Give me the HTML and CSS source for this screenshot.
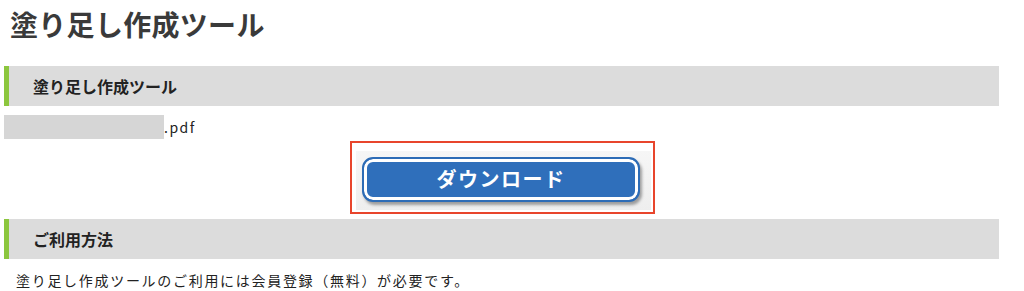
FILE: index.html
```html
<!DOCTYPE html>
<html lang="ja">
<head>
<meta charset="utf-8">
<title>塗り足し作成ツール</title>
<link rel="stylesheet" href="styles.css">
</head>
<body>
<main class="page">
  <h1 class="page-title">塗り足し作成ツール</h1>
  <section class="block">
    <h2 class="block-head">塗り足し作成ツール</h2>
    <div class="file-row"><span class="file-mask"></span><span class="file-ext">.pdf</span></div>
    <div class="download">
      <div class="download-frame">
        <div class="download-img">
          <a class="download-btn" href="#">ダウンロード</a>
        </div>
      </div>
    </div>
  </section>
  <section class="block">
    <h2 class="block-head">ご利用方法</h2>
    <p class="note">塗り足し作成ツールのご利用には会員登録（無料）が必要です。</p>
  </section>
</main>
</body>
</html>
```

FILE: styles.css
```css
html, body {
  margin: 0;
  padding: 0;
  background: #fff;
}
body {
  font-family: "Noto Sans CJK JP", "Noto Sans", sans-serif;
  color: #222;
}
.page {
  width: 995px;
  margin-left: 4px;
}
.page-title {
  margin: 0 0 18px 6px;
  height: 48px;
  line-height: 48px;
  font-size: 28px;
  font-weight: 700;
  letter-spacing: 0.3px;
  color: #3a3a3a;
}
.block-head {
  margin: 0;
  height: 40px;
  line-height: 40px;
  background: #dcdcdc;
  border-left: 5px solid #8cc63e;
  padding-left: 24px;
  font-size: 16px;
  font-weight: 700;
  color: #222;
}
.file-row {
  margin-top: 9px;
  height: 24px;
  line-height: 24px;
  display: flex;
}
.file-mask {
  width: 160px;
  height: 24px;
  background: #d6d6d6;
}
.file-ext {
  font-size: 14px;
  letter-spacing: 1.5px;
  color: #222;
}
.download {
  margin-top: 2px;
  margin-bottom: 5px;
  display: flex;
  justify-content: center;
}
.download-frame {
  margin-left: 2px;
  width: 305px;
  height: 73px;
  border: 2px solid #e8452c;
  padding: 8px 0 2px 4px;
  box-sizing: border-box;
  display: flex;
}
.download-img {
  width: 295px;
  height: 59px;
  background: linear-gradient(#f6f6f6, #eeeeee);
  padding: 6px 0 0 6px;
  box-sizing: border-box;
}
.download-btn {
  display: block;
  width: 278px;
  height: 45px;
  box-sizing: border-box;
  border: 2px solid #2d6cb6;
  border-radius: 11px;
  background: #2f6fbb;
  box-shadow: inset 0 0 0 3px #fff, 2px 3px 3px rgba(0, 0, 0, 0.35);
  color: #fff;
  text-decoration: none;
  text-align: center;
  font-size: 20px;
  font-weight: 700;
  letter-spacing: 1.5px;
  line-height: 40px;
}
.note {
  margin: 10px 0 0 12px;
  line-height: 22px;
  font-size: 14px;
  letter-spacing: 1.7px;
  color: #222;
}
```
